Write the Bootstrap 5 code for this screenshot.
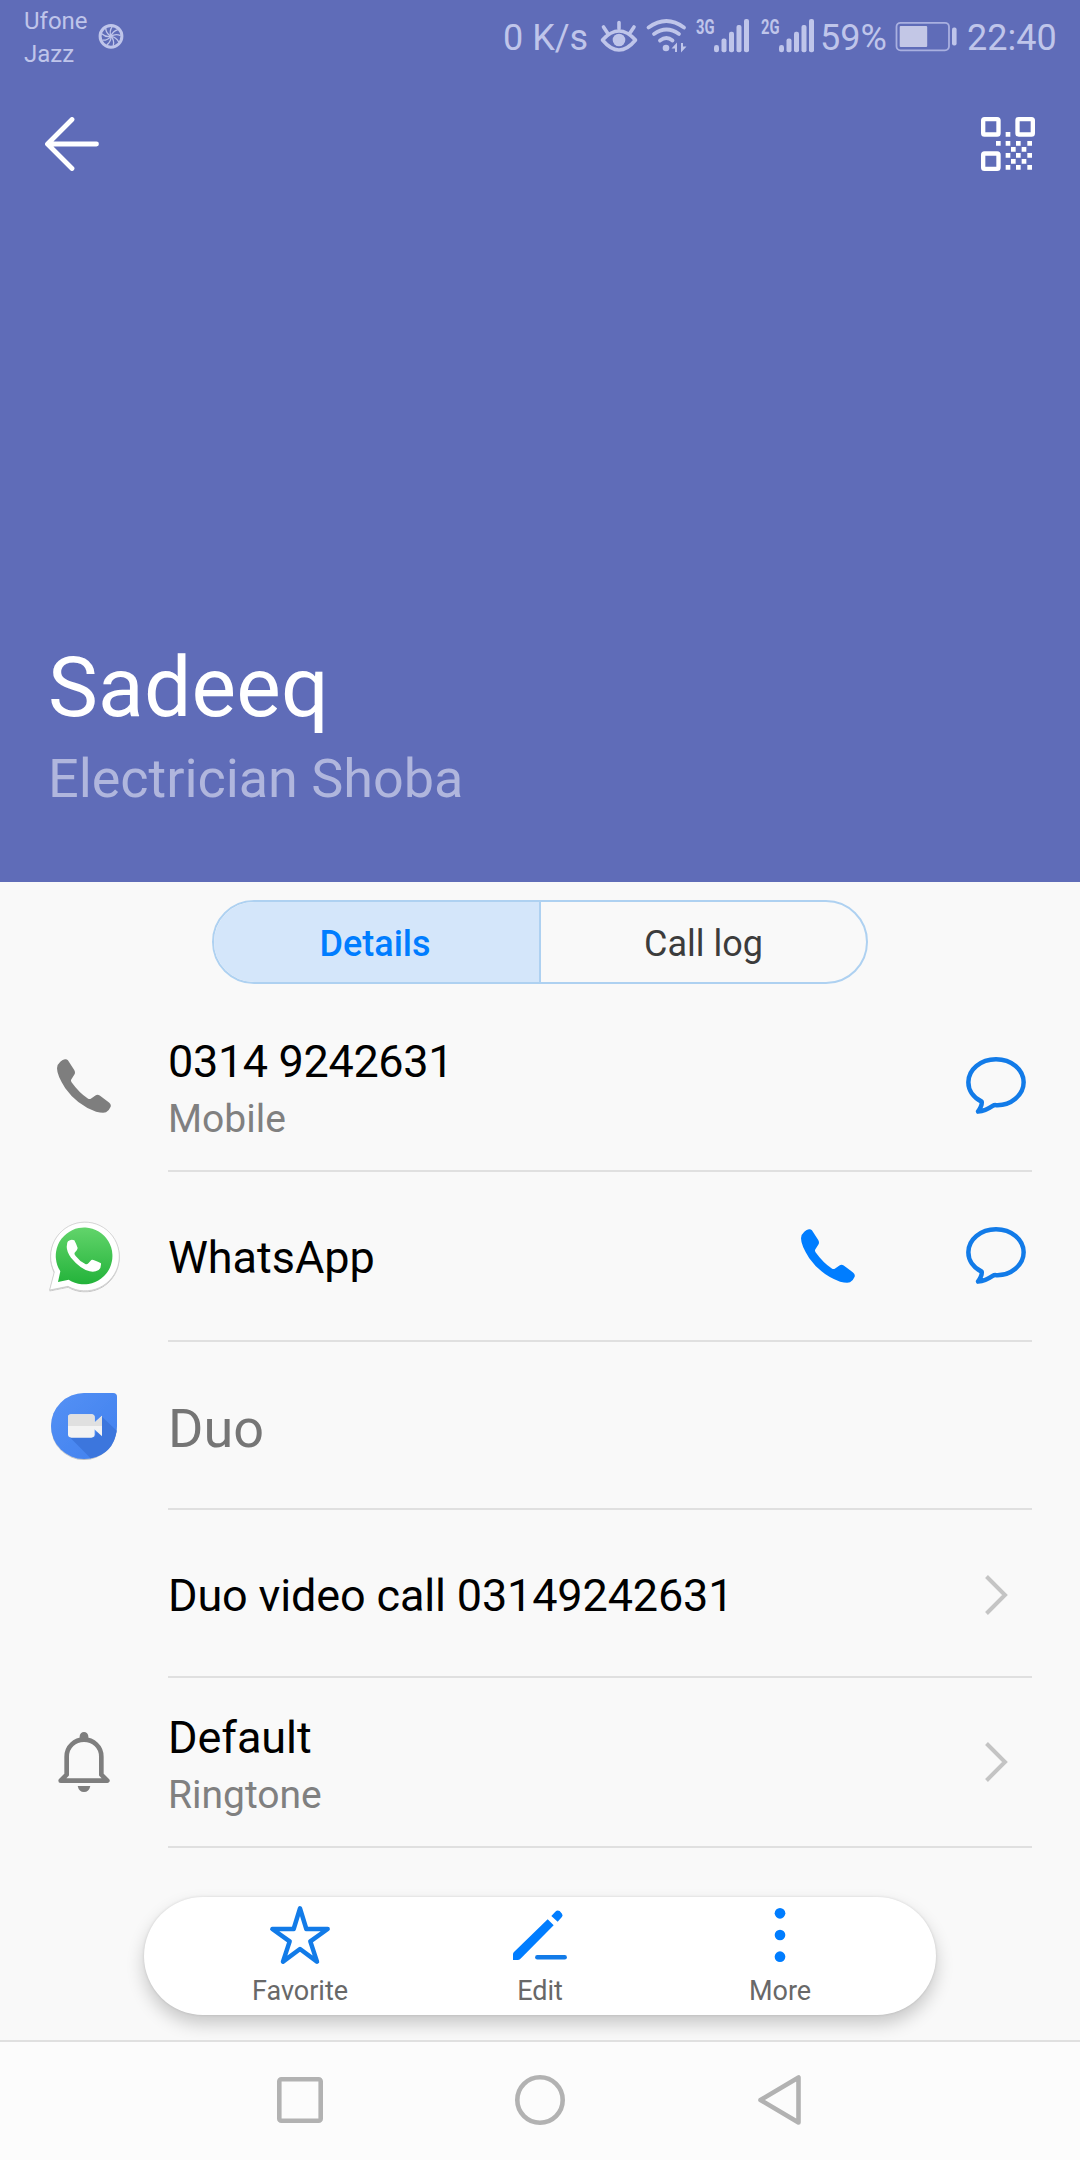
<!DOCTYPE html>
<html lang="en">
<head>
<meta charset="utf-8">
<meta name="viewport" content="width=device-width, initial-scale=1">
<title>Sadeeq</title>
<link rel="stylesheet" href="https://cdn.jsdelivr.net/npm/bootstrap@5.3.0/dist/css/bootstrap.min.css">
<script src="https://cdn.jsdelivr.net/npm/bootstrap@5.3.0/dist/js/bootstrap.bundle.min.js"></script>
<style>
  body { font-family: Roboto, sans-serif; background: #f9f9f9; color: #000; }
  svg { display: block; flex: none; }
  .screen { width: 1080px; height: 2160px; overflow: hidden; }
  .hero { height: 882px; background: #5f6cb8; padding-bottom: 71px; }
  .status { height: 72px; color: #bfc5ea; fill: #bfc5ea; font-size: 36px; line-height: 76px; white-space: nowrap; }
  .carriers { font-size: 24px; line-height: 33px; padding: 5px 0 0 24px; width: 98px; }
  .speed { width: 95px; }
  .percent { width: 72px; }
  .clock { width: 113px; }
  .toolbar { height: 144px; padding: 0 45px; }
  .contact-name { font-size: 84px; line-height: 98px; padding-left: 48px; color: #fff; margin-bottom: 10px; font-weight: 400; letter-spacing: .2px; }
  .company { font-size: 54px; line-height: 64px; padding-left: 48px; color: #b0b6dd; letter-spacing: -.05px; }
  .tabs { width: 656px; height: 84px; margin: 18px auto; border: 2px solid #aed1f1; border-radius: 42px; overflow: hidden; font-size: 36px; }
  .tabs button { color: #3c3c3c; background: none; border: 0; padding: 3px 0 0; line-height: 40px; }
  .tabs button.active { color: #007dff; background: #d4e6fa; font-weight: 500; border-right: 2px solid #aed1f1; flex: 0 0 327px; padding-right: 3px; }
  .entry { height: 168px; }
  .entry.short { height: 166px; }
  .cell { width: 168px; flex: none; }
  .title { font-size: 45px; line-height: 52px; padding-top: 3px; letter-spacing: -.05px; }
  .number { letter-spacing: -.35px; }
  .video { padding-top: 5px; letter-spacing: -.15px; }
  .heading { font-size: 54px; line-height: 64px; padding-top: 7px; color: #757575; }
  .double { padding-top: 6px; }
  .double .title { padding: 0; margin-bottom: 8px; }
  .sub { font-size: 39px; line-height: 46px; color: #808080; }
  .rule { height: 2px; background: #e0e0e0; margin: 0 48px 0 168px; }
  .actions { width: 792px; height: 118px; margin: 49px auto 25px; padding: 4px 36px 0; border-radius: 59px; background: #fff; box-shadow: 0 9px 18px rgba(0,0,0,.2), 0 0 3px rgba(0,0,0,.12); }
  .actions > div { font-size: 27px; line-height: 32px; color: #686868; }
  .actions svg { margin-bottom: 6px; }
  .navkeys { height: 120px; border-top: 2px solid #e0e0e0; background: #fcfcfc; padding: 0 180px; }
  .blue { fill: #007dff; }
  .ring { fill: none; stroke: #127be8; stroke-width: 13.5; stroke-linejoin: round; stroke-linecap: round; }
  .keys { fill: none; stroke: #b2b2b2; stroke-width: 4.6; stroke-linejoin: round; }
</style>
</head>
<body>
<svg width="0" height="0" class="position-absolute">
  <defs>
    <symbol id="phone" viewBox="0 0 163 163"><path d="M24 1Q29 0 33 4L52 33Q56 40 53 46L43 62Q41 66 44 70Q66 101 94 120Q98 122 102 120L116 110Q122 106 129 110L157 131Q164 136 162 144Q157 156 148 161Q138 164 118 159Q60 138 25 88Q0 50 0 28Q1 15 10 8Q17 2 24 1Z"/></symbol>
    <symbol id="chat" viewBox="0 0 180 172"><path class="ring" d="M47 134C22 122 7 100 7 76C7 38 44 7 90 7C136 7 173 38 173 76C173 115 134 146 92 145Q86 143 80 147Q58 162 36 164Q49 145 47 134Z"/></symbol>
    <symbol id="bars" viewBox="0 0 36 34"><rect x="0" y="26" width="5" height="7.3" rx="2.4"/><rect x="7.5" y="19.5" width="5" height="13.8" rx="2"/><rect x="15" y="12.8" width="5" height="20.5" rx="2"/><rect x="22.5" y="6" width="5" height="27.3" rx="2"/><rect x="30" y="0" width="5" height="33.3" rx="2"/></symbol>
    <linearGradient id="green" x1="0" y1="0" x2="0" y2="1"><stop offset="0" stop-color="#62d46b"/><stop offset="1" stop-color="#23b33a"/></linearGradient>
    <linearGradient id="azure" x1="0" y1="0" x2="1" y2="1"><stop offset="0" stop-color="#5591f5"/><stop offset="1" stop-color="#4080ee"/></linearGradient>
    <filter id="soft" x="-20%" y="-20%" width="140%" height="140%"><feDropShadow dx="0" dy="2" stdDeviation="2" flood-opacity=".35"/></filter>
  </defs>
</svg>
<main class="screen d-flex flex-column">
  <header class="hero d-flex flex-column">
    <div class="status d-flex">
      <div class="carriers">Ufone<br>Jazz</div>
      <svg width="26" height="72" viewBox="97.5 0 26 72" fill="none" stroke="#bfc5ea">
        <circle cx="110.5" cy="36.3" r="10.9" stroke-width="3"/>
        <g stroke-width="1.3"><path id="spoke" d="M110.5 36.3q-2-5 1-9.5"/><use href="#spoke" transform="rotate(40 110.5 36.3)"/><use href="#spoke" transform="rotate(80 110.5 36.3)"/><use href="#spoke" transform="rotate(120 110.5 36.3)"/><use href="#spoke" transform="rotate(160 110.5 36.3)"/><use href="#spoke" transform="rotate(200 110.5 36.3)"/><use href="#spoke" transform="rotate(240 110.5 36.3)"/><use href="#spoke" transform="rotate(280 110.5 36.3)"/><use href="#spoke" transform="rotate(320 110.5 36.3)"/></g>
      </svg>
      <div class="speed ms-auto">0 K/s</div>
      <svg width="42" height="72" viewBox="598 0 42 72">
        <path d="M602.5 40Q619 22 635.500 40Q619 60 602.500 40ZM619 22.500v6M603.500 27l4 6M634 27l-4 6" fill="none" stroke="#bfc5ea" stroke-width="3.6" stroke-linecap="round" stroke-linejoin="round"/>
        <circle cx="619" cy="40" r="6.3"/>
      </svg>
      <svg width="50" height="72" viewBox="640 0 50 72">
        <path d="M648.500 27.500Q666.500 14.500 684 27.500M654 34Q666.500 25 679 34M660 40.500Q666.500 35.500 672.500 40.500" fill="none" stroke="#bfc5ea" stroke-width="3.800" stroke-linecap="round"/>
        <circle cx="666" cy="48" r="3.3"/><path d="M671.500 48.500l5.500-6v9.500h-2v-3.500zM686.500 46.500l-5.500 6v-9.500h2v3.500z"/>
      </svg>
      <svg width="65" height="72" viewBox="690 0 65 72"><text x="696" y="33.5" font-size="20" font-weight="700" textLength="18.500" lengthAdjust="spacingAndGlyphs">3G</text><use href="#bars" x="714" y="19" width="36" height="34"/></svg>
      <svg width="65" height="72" viewBox="755 0 65 72"><text x="761" y="33.5" font-size="20" font-weight="700" textLength="18.500" lengthAdjust="spacingAndGlyphs">2G</text><use href="#bars" x="779" y="19" width="36" height="34"/></svg>
      <div class="percent">59%</div>
      <svg width="75" height="72" viewBox="892 0 75 72"><rect x="896.500" y="22.800" width="52.500" height="27.500" rx="4" fill="none" stroke="#a9b0e0" stroke-width="1.8"/><rect x="899.700" y="26" width="27.500" height="21" rx="1" fill="#c3c7e6"/><rect x="952" y="27.500" width="4.600" height="18" rx="2"/></svg>
      <div class="clock">22:40</div>
    </div>
    <div class="toolbar d-flex justify-content-between align-items-center">
      <svg width="54" height="54" viewBox="0 0 54 54" fill="none" stroke="#fff" stroke-width="4.800" stroke-linecap="round" stroke-linejoin="round"><path d="M27 2.500L2.500 27L27 51.500M3 27H51.500"/></svg>
      <svg width="54" height="54" viewBox="0 0 162 162" fill="#fff">
        <g fill="none" stroke="#fff" stroke-width="13"><rect x="6.500" y="6.500" width="46" height="46" rx="4"/><rect x="109.500" y="6.500" width="46" height="46" rx="4"/><rect x="6.500" y="109.500" width="46" height="46" rx="4"/></g>
        <path d="M74 45h14v14h-14zM45 72h14v14h-14zM74 72h14v14h-14zM105 72h14v14h-14zM139 72h14v14h-14zM90 90h14v14h-14zM122 90h14v14h-14zM74 108h14v14h-14zM105 108h14v14h-14zM139 108h14v14h-14zM90 126h14v14h-14zM122 126h14v14h-14zM74 144h14v14h-14zM105 144h14v14h-14zM139 144h14v14h-14z"/>
      </svg>
    </div>
    <h1 class="contact-name mt-auto">Sadeeq</h1>
    <div class="company">Electrician Shoba</div>
  </header>

  <div class="tabs d-flex flex-shrink-0">
    <button class="active">Details</button>
    <button class="flex-fill">Call log</button>
  </div>

  <section>
    <div class="entry d-flex align-items-center">
      <div class="cell d-flex justify-content-center"><svg width="54" height="54" fill="#7e7e7e"><use href="#phone"/></svg></div>
      <div class="double flex-fill"><div class="title number">0314 9242631</div><div class="sub">Mobile</div></div>
      <div class="cell d-flex justify-content-center"><svg width="60" height="57.300"><use href="#chat"/></svg></div>
    </div>
    <div class="rule"></div>
    <div class="entry d-flex align-items-center">
      <div class="cell d-flex justify-content-center">
        <svg width="84" height="84" viewBox="36 42 252 252">
          <path filter="url(#soft)" fill="#fff" stroke="#c6c6c6" stroke-width="2" stroke-linejoin="round" d="M59 270L73 216A103 103 0 1 1 114 259Z"/>
          <path fill="url(#green)" d="M84 246L91 214A85 85 0 1 1 116 239Z"/>
          <path fill="#fff" d="M114 124Q123 116 133 121Q138 130 143 144Q143 150 134 158Q132 162 137 168Q149 184 166 192Q171 194 175 190L184 180Q188 177 213 190Q214 203 206 210Q193 218 179 214Q150 206 123 173Q107 151 111 134Q111 128 114 124Z"/>
        </svg>
      </div>
      <div class="title flex-fill">WhatsApp</div>
      <div class="cell d-flex justify-content-center"><svg width="54" height="54" class="blue"><use href="#phone"/></svg></div>
      <div class="cell d-flex justify-content-center"><svg width="60" height="57.300"><use href="#chat"/></svg></div>
    </div>
    <div class="rule"></div>
    <div class="entry short d-flex align-items-center">
      <div class="cell d-flex justify-content-center">
        <svg width="84" height="84" viewBox="36 549 252 252">
          <path filter="url(#soft)" fill="url(#azure)" d="M162 579H249Q261 579 261 591V678A99 99 0 1 1 162 579Z"/>
          <path fill="#3c76dd" d="M118 710L182 775Q250 762 260 692L216 650L194 712Z"/>
          <rect x="114" y="643" width="80" height="70" rx="10" fill="#f3f3f3"/>
          <path fill="#e0e0e0" d="M114 678V653Q114 643 124 643H184Q194 643 194 653V678Z"/>
          <path fill="#f3f3f3" d="M192 669L216 647V709L192 687Z"/><path fill="#e0e0e0" d="M192 669L216 647V678H192Z"/>
        </svg>
      </div>
      <div class="heading flex-fill">Duo</div>
    </div>
    <div class="rule"></div>
    <div class="entry short d-flex align-items-center">
      <div class="cell"></div>
      <div class="title video flex-fill">Duo video call 03149242631</div>
      <div class="cell d-flex justify-content-center pt-1"><svg width="24" height="42" viewBox="0 0 24 42" fill="none" stroke="#c4c4c4" stroke-width="4"><path d="M2.500 2.500L21 21L2.500 39.500"/></svg></div>
    </div>
    <div class="rule"></div>
    <div class="entry d-flex align-items-center">
      <div class="cell d-flex justify-content-center">
        <svg width="72" height="72" viewBox="54 198 216 216" fill="#7e7e7e">
          <path fill="none" stroke="#7e7e7e" stroke-width="14" stroke-linejoin="round" d="M92 362L110 344V290C110 260 134 239 162 239S214 260 214 290V344L232 362Z"/>
          <path d="M149 238V229A13 13 0 0 1 175 229V238ZM143 378H181Q177 396 162 396T143 378Z"/>
        </svg>
      </div>
      <div class="double flex-fill"><div class="title">Default</div><div class="sub">Ringtone</div></div>
      <div class="cell d-flex justify-content-center"><svg width="24" height="42" viewBox="0 0 24 42" fill="none" stroke="#c4c4c4" stroke-width="4"><path d="M2.500 2.500L21 21L2.500 39.500"/></svg></div>
    </div>
    <div class="rule"></div>
  </section>

  <div class="actions d-flex flex-shrink-0 text-center">
    <div class="col-4 d-flex flex-column align-items-center"><svg width="68" height="68" viewBox="408 93 204 204"><path class="ring" d="M510 115L529 177H593L541 214L561 275L510 237L459 275L479 214L427 177H491Z"/></svg>Favorite</div>
    <div class="col-4 d-flex flex-column align-items-center"><svg width="68" height="68" viewBox="1128 93 204 204" class="blue"><path d="M1149 253Q1149 249 1152 246L1253 148L1271 166L1173 265Q1169 270 1164 270H1149ZM1264 138L1276 125Q1282 119 1289 123L1296 131Q1300 137 1295 142L1283 155Z"/><path class="ring" d="M1222 262H1304"/></svg>Edit</div>
    <div class="col-4 d-flex flex-column align-items-center"><svg width="68" height="68" viewBox="558 93 204 204" class="blue"><circle cx="660" cy="130" r="16"/><circle cx="660" cy="195" r="16"/><circle cx="660" cy="260" r="16"/></svg>More</div>
  </div>

  <nav class="navkeys d-flex flex-shrink-0 align-items-center justify-content-around">
    <svg width="60" height="60" viewBox="0 0 60 60" class="keys"><rect x="9.300" y="8.300" width="41.400" height="41.400" rx="2"/></svg>
    <svg width="60" height="60" viewBox="0 0 60 60" class="keys"><circle cx="30" cy="29" r="22.700"/></svg>
    <svg width="60" height="60" viewBox="0 0 60 60" class="keys"><path d="M10.500 29L48.500 6.500V51.500Z"/></svg>
  </nav>
</main>
</body>
</html>
